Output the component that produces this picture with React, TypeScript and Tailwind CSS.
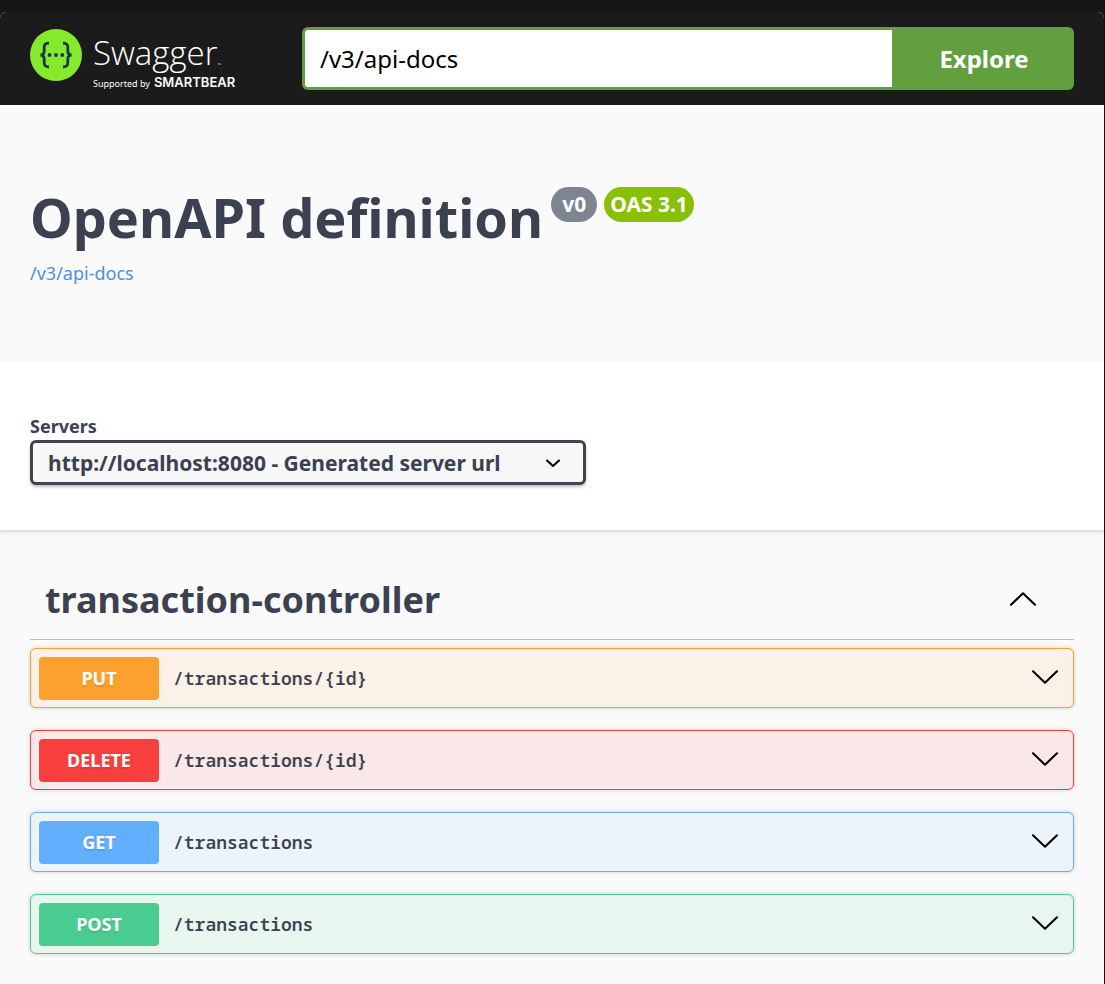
import { useState } from "react";

type Operation = {
  method: string;
  path: string;
  row: string;
  badge: string;
};

const operations: Operation[] = [
  { method: "PUT", path: "/transactions/{id}", row: "border-[#fca130] bg-[#fbf1e6]", badge: "bg-[#fca130]" },
  { method: "DELETE", path: "/transactions/{id}", row: "border-[#f93e3e] bg-[#fae7e7]", badge: "bg-[#f93e3e]" },
  { method: "GET", path: "/transactions", row: "border-[#61affe] bg-[#ebf3fb]", badge: "bg-[#61affe]" },
  { method: "POST", path: "/transactions", row: "border-[#49cc90] bg-[#e8f6f0]", badge: "bg-[#49cc90]" },
];

function Chevron({ up = false }: { up?: boolean }) {
  return (
    <svg width="30" height="30" viewBox="0 0 30 30" fill="none" stroke="#000" strokeWidth="2.1" strokeLinecap="round" strokeLinejoin="round" aria-hidden="true">
      <path d={up ? "M3 19.7 15 8.3 27 19.7" : "M3 8.3 15 19.7 27 8.3"} />
    </svg>
  );
}

function Logo() {
  return (
    <a href="#" aria-label="Swagger" className="flex h-[63px] w-[242px] shrink-0 items-start text-white">
      <svg width="52" height="52" viewBox="0 0 52 52" aria-hidden="true" className="mt-0.5 shrink-0">
        <circle cx="26" cy="26" r="26" fill="#85ea2d" />
        <g fill="none" stroke="#173647" strokeWidth="2.8">
          <path d="M19 14.2c-3.6 0-4.8 1-4.8 4.2v3.4c0 2.6-.8 4.2-3.8 4.2 3 0 3.8 1.6 3.8 4.2v3.4c0 3.2 1.2 4.2 4.8 4.2" />
          <path d="M33 14.2c3.6 0 4.8 1 4.8 4.2v3.4c0 2.6.8 4.2 3.8 4.2-3 0-3.8 1.6-3.8 4.2v3.4c0 3.2-1.2 4.2-4.8 4.2" />
        </g>
        <g fill="#173647">
          <circle cx="19.6" cy="26" r="1.9" />
          <circle cx="26" cy="26" r="1.9" />
          <circle cx="32.3" cy="26" r="1.9" />
        </g>
      </svg>
      <span className="ml-[11px] flex flex-col">
        <span className="flex h-12 items-end font-['Open_Sans','Noto_Sans',sans-serif] text-[33px] leading-[44px] font-light">
          Swagger
          <span className="mb-0.5 text-[5px] leading-[16px]">™</span>
        </span>
        <span className="flex items-baseline gap-1 whitespace-nowrap leading-[14px]">
          <span className="text-[9px]">Supported by</span>
          <span className="font-[Inter,sans-serif] text-[13px] font-semibold">SMARTBEAR</span>
        </span>
      </span>
    </a>
  );
}

export default function App() {
  const [url, setUrl] = useState("/v3/api-docs");
  return (
    <div className="min-h-screen bg-[#131517] pt-3 pr-px font-['Noto_Sans',sans-serif] text-[#3b4151]">
      <div className="flex min-h-[calc(100vh-12px)] flex-col overflow-hidden rounded-t-md bg-[#fafafa]">
        <header className="flex bg-[#1b1b1b] px-[30px] py-[15px]">
          <Logo />
          <form className="ml-[30px] flex h-[63px] min-w-0 flex-1" onSubmit={(e) => e.preventDefault()}>
            <input
              aria-label="API definition URL"
              value={url}
              onChange={(e) => setUrl(e.target.value)}
              className="min-w-0 flex-1 rounded-l-md border-[3px] border-r-0 border-[#62a03f] bg-white px-[15px] text-[24px] text-black outline-none"
            />
            <button className="w-[182px] rounded-r-md bg-[#62a03f] pl-0.5 text-[24px] font-bold text-white">Explore</button>
          </form>
        </header>

        <section className="px-[30px] pt-[75px] pb-[76px]">
          <div className="flex items-start">
            <h1 className="text-[54px] leading-[75px] font-bold whitespace-nowrap">OpenAPI definition</h1>
            <div className="mt-[7px] ml-2 flex gap-[7px] text-[21px] leading-[35px] font-bold text-white">
              <span className="rounded-full bg-[#7d8492] px-[11px]">v0</span>
              <span className="rounded-full bg-[#89bf04] px-[6px]">OAS 3.1</span>
            </div>
          </div>
          <a href="/v3/api-docs" className="mt-1.5 inline-block text-[18px] leading-[24px] text-[#4990e2]">
            /v3/api-docs
          </a>
        </section>

        <section className="bg-white px-[30px] pt-[52px] pb-[45px] shadow-[0_2px_3px_rgba(0,0,0,0.15)]">
          <label htmlFor="servers" className="block pb-0.5 text-[18px] leading-[24px] font-bold">
            Servers
          </label>
          <div className="grid w-[556px] max-w-full items-center">
            <select
              id="servers"
              className="col-start-1 row-start-1 h-[45px] w-full appearance-none rounded-md border-[3px] border-[#41444e] bg-[#f7f7f7] pt-0.5 pr-[60px] pl-[15px] text-[21px] font-bold shadow-[0_2px_3px_rgba(0,0,0,0.25)]"
            >
              <option>http://localhost:8080 - Generated server url</option>
            </select>
            <svg
              width="20"
              height="20"
              viewBox="0 0 20 20"
              fill="none"
              stroke="#000"
              strokeWidth="2.1"
              strokeLinecap="round"
              strokeLinejoin="round"
              aria-hidden="true"
              className="pointer-events-none col-start-1 row-start-1 mr-[23px] justify-self-end"
            >
              <path d="M4 7.5 10 13l6-5.5" />
            </svg>
          </div>
        </section>

        <main className="px-[30px] pt-[30px] pb-[29px]">
          <div className="flex h-20 items-center justify-between border-b border-[#bbbcbe] pr-9 pl-[15px]">
            <h2 className="text-[36px] leading-[54px] font-bold">transaction-controller</h2>
            <button aria-label="Collapse transaction-controller">
              <Chevron up />
            </button>
          </div>
          <ul className="mt-2 flex flex-col gap-[22px]">
            {operations.map((op) => (
              <li key={op.method}>
                <button
                  className={`flex h-[60px] w-full items-center rounded-md border pr-[13px] pl-2 text-left shadow-[0_0_4px_rgba(0,0,0,0.19)] ${op.row}`}
                >
                  <span
                    className={`h-[43px] w-[120px] shrink-0 rounded text-center text-[18px] leading-[43px] font-bold text-white [text-shadow:0_2px_0_rgba(0,0,0,0.1)] ${op.badge}`}
                  >
                    {op.method}
                  </span>
                  <span className="ml-[14px] min-w-0 flex-1 font-['Noto_Sans_Mono','DejaVu_Sans_Mono',monospace] text-[18px] font-semibold">
                    {op.path}
                  </span>
                  <Chevron />
                </button>
              </li>
            ))}
          </ul>
        </main>
      </div>
    </div>
  );
}
